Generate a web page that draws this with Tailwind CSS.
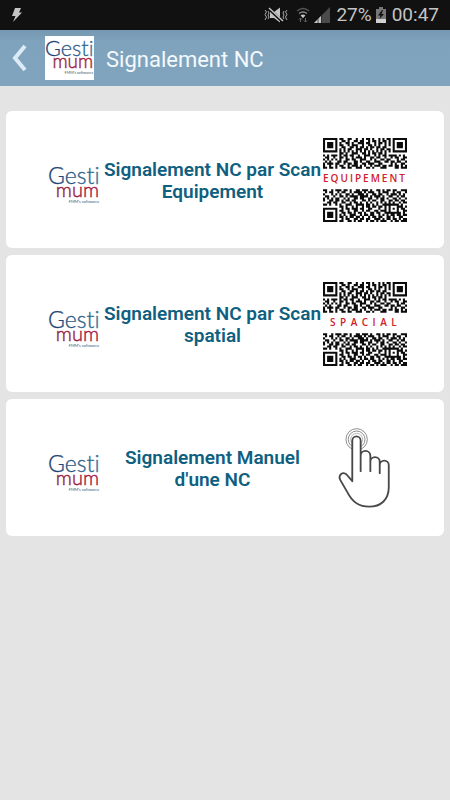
<!DOCTYPE html>
<html lang="fr">
<head>
<meta charset="utf-8">
<meta name="viewport" content="width=device-width, initial-scale=1">
<title>Signalement NC</title>
<script src="https://cdn.jsdelivr.net/npm/@tailwindcss/browser@4"></script>
</head>
<body class="min-h-screen bg-[#e4e4e4] font-[Roboto,sans-serif]">

<svg class="absolute size-0" aria-hidden="true">
  <defs>
    <linearGradient id="blue" x1="0" x2="1" y1="0" y2="0">
      <stop offset="0" stop-color="#1d3a6e"/><stop offset="1" stop-color="#2f6f98"/>
    </linearGradient>
    <linearGradient id="red" x1="0" x2="1" y1="0" y2="0">
      <stop offset="0" stop-color="#8e2440"/><stop offset="1" stop-color="#a81c3a"/>
    </linearGradient>
    <symbol id="logo" viewBox="0 0 52 38">
      <g class="[font-variant-ligatures:none]" font-family="Lato, sans-serif" font-weight="300">
        <text x="0" y="17" font-size="23" fill="url(#blue)" stroke="url(#blue)" stroke-width=".3">Gesti</text>
        <text x="51" y="30" text-anchor="end" font-size="20" fill="url(#red)" stroke="url(#red)" stroke-width=".4">mum</text>
        <text x="51" y="36" text-anchor="end" font-size="4" font-weight="400" fill="#3c5a70">FMM's softwares</text>
      </g>
    </symbol>
    <symbol id="qr" viewBox="0 0 41 41"><path id="modules" fill="#0c0c0c"/></symbol>
  </defs>
</svg>

<div class="flex h-[30px] items-center justify-between bg-[#111111] pr-[11px] pl-[11px] text-[19px] text-[#c4c4c4]">
  <svg class="h-4 w-3" viewBox="0 0 12 16" fill="#c4c4c4"><path d="M4 1h6L8 5.500h3L2 15l2.500-6H1z"/></svg>
  <div class="flex items-center">
    <svg class="mr-[8px] h-4 w-6" viewBox="0 0 24 16">
      <path d="M6 5h4l6-4.500v15L10 11H6z" fill="#c4c4c4"/>
      <path d="M4 1l15 14" stroke="#111" stroke-width="3"/>
      <path d="M5 1l14 13" stroke="#c4c4c4" stroke-width="1.500"/>
      <path d="M1 3l1.500 2L1 7.500 2.500 10 1 13M4 4l1 2-1 2 1 2-1 2M23 3l-1.500 2L23 7.500 21.500 10 23 13M20 4l-1 2 1 2-1 2 1 2" fill="none" stroke="#aaa"/>
    </svg>
    <svg class="mr-[4px] h-4 w-[14px]" viewBox="0 0 14 16" fill="none" stroke-width="1.500">
      <path d="M1 4q6-5 12 0" stroke="#555"/><path d="M3 6.500q4-3 8 0" stroke="#888"/><path d="M5 9q2-1.500 4 0" stroke="#c4c4c4"/>
      <circle cx="7" cy="9.500" r="1.200" fill="#c4c4c4"/>
      <path d="M4.500 15v-4M3 12.500L4.500 11 6 12.500M9.500 11v4M8 13.500L9.500 15l1.500-1.500" stroke="#666" stroke-width="1"/>
    </svg>
    <svg class="mr-[6px] h-4 w-4" viewBox="0 0 16 16"><path d="M16 0v16H0z" fill="#4a4a4a"/><path d="M7 9v7H0z" fill="#c4c4c4"/><path d="M4 11v5M7.500 8v8" stroke="#222" stroke-width=".7"/></svg>
    <span>27%</span>
    <svg class="mr-[6px] ml-[4px] h-4 w-[10px]" viewBox="0 0 10 16"><path d="M3 0h4v2h3v14H0V2h3z" fill="#777"/><path d="M0 12h10v4H0z" fill="#d0d0d0"/><path d="M6 3L2 8.500h2.500L3.500 12 8 7H5.500L7 3z" fill="#111"/></svg>
    <span>00:47</span>
  </div>
</div>

<header class="flex h-14 items-center bg-linear-to-b from-[#7698b0] via-[#7fa3bd] via-20% to-[#80a4be] pl-[11px]">
  <button type="button" aria-label="Retour" class="flex h-14 w-[34px] items-center">
    <svg class="h-7 w-[17px]" viewBox="0 0 17 28" fill="none" stroke="#dcebf5" stroke-width="4"><path d="M14 2L4 14l10 12"/></svg>
  </button>
  <span class="flex h-11 w-[49px] items-center justify-center bg-white">
    <svg class="h-9 w-[49px]" role="img" aria-label="Gestimum"><use href="#logo"/></svg>
  </span>
  <h1 class="ml-3 pt-[3px] text-[22px] text-[#f4f9fc]">Signalement NC</h1>
</header>

<main class="flex flex-col gap-[7px] px-[6px] pt-[25px] text-[19px] leading-[22px] font-semibold text-[#0f6080]">
  <button type="button" class="flex h-[137px] items-center rounded-md bg-white pr-[37px] pl-[42px]">
    <svg class="mt-3 h-[38px] w-[52px] shrink-0" role="img" aria-label="Gestimum"><use href="#logo"/></svg>
    <span class="flex-1 pt-[2px] pl-[2px]">Signalement NC par Scan Equipement</span>
    <svg class="size-[84px] shrink-0" viewBox="0 0 84 84">
      <use href="#qr" width="84" height="84"/>
      <text x="0" y="44" font-family="Open Sans, sans-serif" font-size="10" font-weight="600" letter-spacing="2" fill="#d0202a">EQUIPEMENT</text>
    </svg>
  </button>
  <button type="button" class="flex h-[137px] items-center rounded-md bg-white pr-[37px] pl-[42px]">
    <svg class="mt-3 h-[38px] w-[52px] shrink-0" role="img" aria-label="Gestimum"><use href="#logo"/></svg>
    <span class="flex-1 pt-[2px] pl-[2px]">Signalement NC par Scan spatial</span>
    <svg class="size-[84px] shrink-0" viewBox="0 0 84 84">
      <use href="#qr" width="84" height="84"/>
      <text x="7" y="44" font-family="Open Sans, sans-serif" font-size="10" font-weight="600" letter-spacing="4.500" fill="#d0202a">SPACIAL</text>
    </svg>
  </button>
  <button type="button" class="flex h-[137px] items-center rounded-md bg-white pr-[37px] pl-[42px]">
    <svg class="mt-3 h-[38px] w-[52px] shrink-0" role="img" aria-label="Gestimum"><use href="#logo"/></svg>
    <span class="flex-1 pt-[2px] pl-[2px]">Signalement Manuel d'une NC</span>
    <span class="flex w-[84px] shrink-0 justify-center">
      <svg class="h-[82px] w-[54px]" viewBox="40 20 160 245" fill="none">
        <g stroke="#777" stroke-width="2.500"><circle cx="95" cy="57" r="32"/><circle cx="95" cy="57" r="25"/><circle cx="95" cy="57" r="18" stroke="#aaa"/></g>
        <path d="M82 182V61a12.500 13 0 0 1 25 0V152V106a14.500 14.500 0 0 1 29 0V152V124a14 14 0 0 1 28 0V158V134a13.500 13.500 0 0 1 27 0V200C191 238 167 258 132 258C96 258 78 236 68 216L46 178C39 163 54 152 65 162Z" fill="#fff" stroke="#484848" stroke-width="5.500" stroke-linejoin="round"/>
      </svg>
    </span>
  </button>
</main>

<script>
  // Rows of the code above and below the caption band; "#" is a dark module.
  const top_ = [
    "#######.##..##..#..#.##.#..#.#.##.#######",
    "#.....#..##.#..##.##..#.##.#.##.#.#.....#",
    "#.###.#.#..##.#..###.##..#.##.#.#.#.###.#",
    "#.###.#.##..#.###..#..##.#.#..#.#.#.###.#",
    "#.###.#..##..##.#.##.#.##.##.##...#.###.#",
    "#.....#.#.#.##..###.##.#..#.##.##.#.....#",
    "#######.#.#.#.#.#.#.#.#.#.#.#.#.#.#######",
    "........##.#..###..##.#.##.##.#..........",
    "#.#.###.#.##.##..#..###..#.#.##.####.#.#.",
    ".##..#..##.#..#.###.#..##.##..#..#.##..##",
    "#.#.#.#.#..##.##..###..#.#..##.##...#.##.",
    ".#.#...##.##...##.#..##..###..##.##.##..#",
    "#.###.##..#.##.##..##.###..##....#.#..##.",
    "#..#..#.##..#.###.#.#..#.###.##.##.##.#.#",
    "##.##.#..##.##..###..##.#...###....##.###"
  ];
  const bottom = [
    "##..#.###.##.#..##.###.#..##.#.##.##..###",
    ".#.##..#.##..#.####.#.###..#.###..#.##..#",
    "#...#.#.#..##.#..###.#..##.##..#.###.#.#.",
    ".##..#..##.#.####.####.#.###.#..##..#.##.",
    "#.#.#.##..#.#..##.##..##..#.##.#..##.#..#",
    "#..##.##.#.##.##...##.#.##..##..##.##.##.",
    "..##.##..##..#.##.#..#.#..#.#.#.#.#..#.##",
    "##.#..#.#..###..####.##.#.#..########.#..",
    "........##.#..#.#..#.##.##.##.#.#...###.#",
    "#######..#.##.###.##..##...#..#.#.#.#.##.",
    "#.....#.##..#..##..#.##..##.###.#...#..##",
    "#.###.#..##.##.#.##.#..##.##..########.#.",
    "#.###.#.#.#..###..#.##.##..#.#.#.##.##.##",
    "#.###.#.##.#.##.##.#..#.##.##..##.#..##..",
    "#.....#..#.##..##.##.##..###.#.##.##.#.##",
    "#######.##..##.#.##..#.##.#.###..#.##.###"
  ];
  const draw = (rows, y0) => rows.flatMap((row, y) =>
    [...row].map((c, x) => c === "#" ? `M${x} ${y + y0}h1.02v1.02h-1.02z` : "")).join("");
  document.getElementById("modules").setAttribute("d", draw(top_, 0) + draw(bottom, 25));
</script>
</body>
</html>
